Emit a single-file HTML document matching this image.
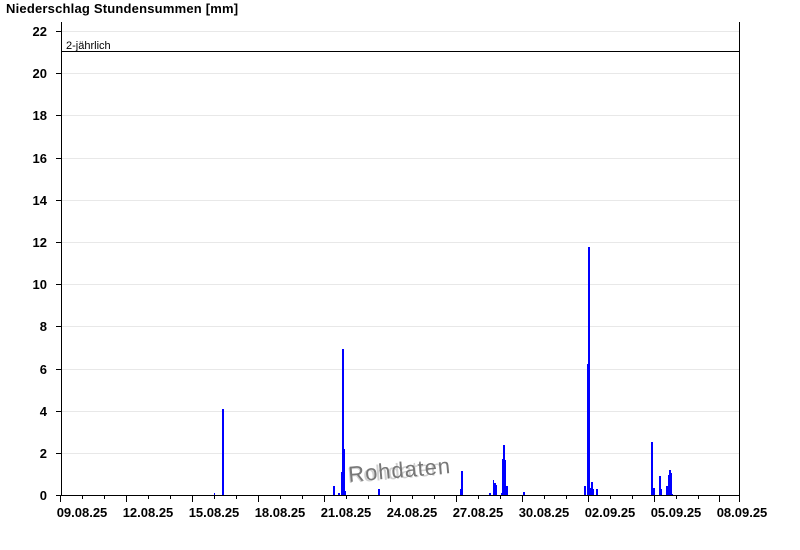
<!DOCTYPE html>
<html><head><meta charset="utf-8"><style>
html,body{margin:0;padding:0;background:#fff;width:800px;height:550px;overflow:hidden}
svg{display:block}
text{font-family:"Liberation Sans",Arial,sans-serif}
</style></head><body>
<svg width="800" height="550" viewBox="0 0 800 550" xmlns="http://www.w3.org/2000/svg">
<text x="6" y="13" font-size="13" font-weight="bold" fill="#000" letter-spacing="0.2">Niederschlag Stundensummen [mm]</text>
<g stroke="#e8e8e8" stroke-width="1">
<line x1="61" y1="453.5" x2="740" y2="453.5"/>
<line x1="61" y1="411.5" x2="740" y2="411.5"/>
<line x1="61" y1="369.5" x2="740" y2="369.5"/>
<line x1="61" y1="326.5" x2="740" y2="326.5"/>
<line x1="61" y1="284.5" x2="740" y2="284.5"/>
<line x1="61" y1="242.5" x2="740" y2="242.5"/>
<line x1="61" y1="200.5" x2="740" y2="200.5"/>
<line x1="61" y1="158.5" x2="740" y2="158.5"/>
<line x1="61" y1="115.5" x2="740" y2="115.5"/>
<line x1="61" y1="73.5" x2="740" y2="73.5"/>
<line x1="61" y1="31.5" x2="740" y2="31.5"/>
</g>
<line x1="61" y1="51.5" x2="740" y2="51.5" stroke="#000"/>
<text x="66" y="49" font-size="11" fill="#000">2-jährlich</text>
<g fill="#0000ff">
<rect x="214" y="493" width="1" height="2"/>
<rect x="222" y="409" width="2" height="86"/>
<rect x="333" y="486" width="2" height="9"/>
<rect x="338" y="493" width="2" height="2"/>
<rect x="341" y="472" width="1" height="23"/>
<rect x="342" y="349" width="2" height="146"/>
<rect x="344" y="449" width="1" height="46"/>
<rect x="345" y="491" width="1" height="4"/>
<rect x="378" y="489" width="2" height="6"/>
<rect x="460" y="489" width="1" height="6"/>
<rect x="461" y="471" width="2" height="24"/>
<rect x="489" y="493" width="2" height="2"/>
<rect x="493" y="480" width="1" height="15"/>
<rect x="494" y="483" width="2" height="12"/>
<rect x="496" y="485" width="1" height="10"/>
<rect x="501" y="493" width="1" height="2"/>
<rect x="502" y="459" width="1" height="36"/>
<rect x="503" y="445" width="2" height="50"/>
<rect x="505" y="460" width="1" height="35"/>
<rect x="506" y="486" width="2" height="9"/>
<rect x="523" y="492" width="2" height="3"/>
<rect x="584" y="486" width="2" height="9"/>
<rect x="587" y="364" width="1" height="131"/>
<rect x="588" y="247" width="2" height="248"/>
<rect x="590" y="488" width="1" height="7"/>
<rect x="591" y="482" width="2" height="13"/>
<rect x="593" y="489" width="1" height="6"/>
<rect x="596" y="489" width="2" height="6"/>
<rect x="651" y="442" width="2" height="53"/>
<rect x="653" y="488" width="2" height="7"/>
<rect x="659" y="476" width="2" height="19"/>
<rect x="661" y="489" width="1" height="6"/>
<rect x="666" y="486" width="2" height="9"/>
<rect x="668" y="475" width="1" height="20"/>
<rect x="669" y="470" width="2" height="25"/>
<rect x="671" y="473" width="1" height="22"/>
<rect x="672" y="494" width="1" height="1"/>
</g>
<g stroke="#000" stroke-width="1">
<line x1="61.5" y1="22" x2="61.5" y2="496"/>
<line x1="739.5" y1="22" x2="739.5" y2="496"/>
<line x1="61" y1="495.5" x2="740" y2="495.5"/>
<line x1="56" y1="453.5" x2="61" y2="453.5"/><line x1="56" y1="411.5" x2="61" y2="411.5"/>
<line x1="56" y1="369.5" x2="61" y2="369.5"/><line x1="56" y1="326.5" x2="61" y2="326.5"/>
<line x1="56" y1="284.5" x2="61" y2="284.5"/><line x1="56" y1="242.5" x2="61" y2="242.5"/>
<line x1="56" y1="200.5" x2="61" y2="200.5"/><line x1="56" y1="158.5" x2="61" y2="158.5"/>
<line x1="56" y1="115.5" x2="61" y2="115.5"/><line x1="56" y1="73.5" x2="61" y2="73.5"/>
<line x1="56" y1="31.5" x2="61" y2="31.5"/><line x1="56" y1="495.5" x2="61" y2="495.5"/>
</g>
<g stroke="#000" stroke-width="1">
<path d="M60.5 495v7M82.5 495v4M104.5 495v4M126.5 495v7M148.5 495v4M170.5 495v4M192.5 495v7M214.5 495v4M236.5 495v4M258.5 495v7M280.5 495v4M302.5 495v4M324.5 495v7M346.5 495v4M368.5 495v4M390.5 495v7M412.5 495v4M434.5 495v4M456.5 495v7M478.5 495v4M500.5 495v4M522.5 495v7M544.5 495v4M566.5 495v4M588.5 495v7M610.5 495v4M632.5 495v4M654.5 495v7M676.5 495v4M698.5 495v4M719.5 495v7M739.5 495v7"/>
</g>
<g font-size="13" font-weight="bold" fill="#000" text-anchor="end">
<text x="47" y="500">0</text><text x="47" y="458">2</text><text x="47" y="416">4</text>
<text x="47" y="374">6</text><text x="47" y="331">8</text><text x="47" y="289">10</text>
<text x="47" y="247">12</text><text x="47" y="205">14</text><text x="47" y="163">16</text>
<text x="47" y="120">18</text><text x="47" y="78">20</text><text x="47" y="36">22</text>
</g>
<g font-size="13" font-weight="bold" fill="#000" text-anchor="middle">
<text x="82" y="517">09.08.25</text><text x="148" y="517">12.08.25</text>
<text x="214" y="517">15.08.25</text><text x="280" y="517">18.08.25</text>
<text x="346" y="517">21.08.25</text><text x="412" y="517">24.08.25</text>
<text x="478" y="517">27.08.25</text><text x="544" y="517">30.08.25</text>
<text x="610" y="517">02.09.25</text><text x="676" y="517">05.09.25</text>
<text x="742" y="517">08.09.25</text>
</g>
<text x="349" y="482" font-size="22" fill="#d0d0d0" transform="rotate(-5 349 482)" dx="-1" dy="1">Rohdaten</text>
<text x="349" y="482" font-size="22" fill="#777" transform="rotate(-5 349 482)" textLength="102">Rohdaten</text>
</svg>
</body></html>
